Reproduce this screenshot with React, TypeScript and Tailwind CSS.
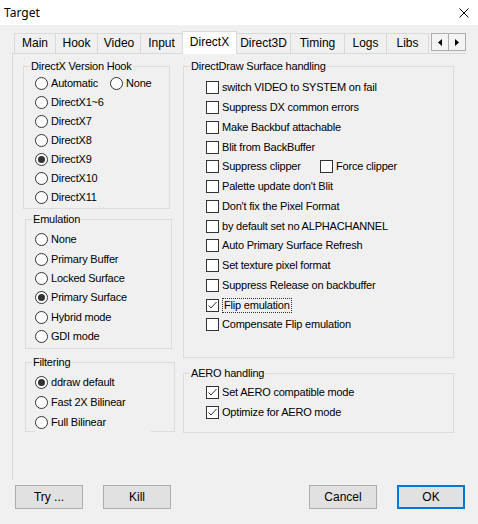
import clsx from "clsx";
import type { ReactNode } from "react";

const tabs = ["Main", "Hook", "Video", "Input", "DirectX", "Direct3D", "Timing", "Logs", "Libs"];
const tabWidths: Record<string, string> = {
  Main: "w-[41px]",
  Hook: "w-[42px]",
  Video: "w-[43px]",
  Input: "w-[42px]",
  DirectX: "w-[55px]",
  Direct3D: "w-[53px]",
  Timing: "w-[54px]",
  Logs: "w-[42px]",
  Libs: "w-[43px]",
};

function Radio({ label, checked }: { label: string; checked?: boolean }) {
  return (
    <span className="flex items-center">
      <span className="flex h-[13px] w-[13px] shrink-0 items-center justify-center rounded-full border border-[#333] bg-white">
        {checked ? <span className="h-[7px] w-[7px] rounded-full bg-[#333]" /> : null}
      </span>
      <span className="ml-[3px] whitespace-nowrap">{label}</span>
    </span>
  );
}

function Check({ label, checked, focused }: { label: string; checked?: boolean; focused?: boolean }) {
  return (
    <span className="flex items-center">
      <span className="flex h-[13px] w-[13px] shrink-0 items-center justify-center border border-[#333] bg-white">
        {checked ? (
          <svg width="11" height="11" viewBox="0 0 11 11" fill="none">
            <path d="M1.5 5.5 L4 8 L9.5 2" stroke="#333" strokeWidth="1" />
          </svg>
        ) : null}
      </span>
      <span
        className={clsx(
          "ml-[3px] whitespace-nowrap",
          focused && "ml-[2px] border border-dotted border-[#333] px-[1px]"
        )}
      >
        {label}
      </span>
    </span>
  );
}

function Group({ title, className, children }: { title: string; className: string; children: ReactNode }) {
  return (
    <fieldset className={clsx("shrink-0 border border-[#dcdcdc]", className)}>
      <legend className="ml-[6px] px-[1px] leading-[13px]">{title}</legend>
      {children}
    </fieldset>
  );
}

const ddrawRows: { label: string; checked?: boolean; focused?: boolean }[] = [
  { label: "switch VIDEO to SYSTEM on fail" },
  { label: "Suppress DX common errors" },
  { label: "Make Backbuf attachable" },
  { label: "Blit from BackBuffer" },
  { label: "CLIPPER" },
  { label: "Palette update don't Blit" },
  { label: "Don't fix the Pixel Format" },
  { label: "by default set no ALPHACHANNEL" },
  { label: "Auto Primary Surface Refresh" },
  { label: "Set texture pixel format" },
  { label: "Suppress Release on backbuffer" },
  { label: "Flip emulation", checked: true, focused: true },
  { label: "Compensate Flip emulation" },
];

export default function App() {
  return (
    <div className="flex h-[524px] w-[478px] flex-col bg-[#f0f0f0] font-['Liberation_Sans',Arial,sans-serif] text-[11px] leading-[13px] tracking-[-0.2px] text-black">
      {/* title bar */}
      <div className="flex h-[25px] items-center justify-between bg-white pl-[4px] pr-[9px]">
        <span className="font-['Segoe_UI','Noto_Sans',sans-serif] text-[12px] tracking-normal">Target</span>
        <svg width="10" height="10" viewBox="0 0 10 10">
          <path d="M0.5 0.5 L9.5 9.5 M9.5 0.5 L0.5 9.5" stroke="#111" strokeWidth="1" />
        </svg>
      </div>

      {/* tabs */}
      <div className="mt-[6px] flex h-[22px] items-end pl-[14px] text-[12px] tracking-normal">
        {tabs.map((t) =>
          t === "DirectX" ? (
            <div
              key={t}
              className={clsx(
                "relative z-10 -mb-px flex h-[23px] items-center justify-center border-x border-t border-[#d9d9d9] bg-white pb-[2px]",
                tabWidths[t]
              )}
            >
              {t}
            </div>
          ) : (
            <div
              key={t}
              className={clsx(
                "flex h-[20px] items-center justify-center border-t border-[#d9d9d9]",
                t !== "Direct3D" && "border-l",
                t === "Libs" && "border-r",
                tabWidths[t]
              )}
            >
              {t}
            </div>
          )
        )}
        <div className="mb-[2px] ml-[2px] flex h-[18px]">
          <div className="flex w-[18px] items-center justify-center border border-[#adadad] bg-[#f4f4f4]">
            <svg width="4" height="7" viewBox="0 0 4 7">
              <path d="M4 0 L0 3.5 L4 7 Z" fill="#000" />
            </svg>
          </div>
          <div className="-ml-px flex w-[18px] items-center justify-center border border-[#adadad] bg-[#f4f4f4]">
            <svg width="4" height="7" viewBox="0 0 4 7">
              <path d="M0 0 L4 3.5 L0 7 Z" fill="#000" />
            </svg>
          </div>
        </div>
      </div>

      {/* tab page */}
      <div className="ml-[12px] flex h-[427px] w-[454px] shrink-0 border-l border-t border-[#d9d9d9]">
        <div className="flex w-[162px] shrink-0 flex-col">
          <Group title="DirectX Version Hook" className="ml-[10px] mt-[6px] h-[149px] w-[147px]">
            <div className="pl-[11px] pt-[1px]">
              <div className="flex h-[19px] items-center">
                <div className="w-[75px]">
                  <Radio label="Automatic" />
                </div>
                <Radio label="None" />
              </div>
              {["DirectX1~6", "DirectX7", "DirectX8", "DirectX9", "DirectX10", "DirectX11"].map((l) => (
                <div key={l} className="flex h-[19px] items-center">
                  <Radio label={l} checked={l === "DirectX9"} />
                </div>
              ))}
            </div>
          </Group>

          <Group title="Emulation" className="ml-[12px] mt-[4px] h-[136px] w-[147px]">
            <div className="pl-[9px] pt-[4px]">
              {["None", "Primary Buffer", "Locked Surface", "Primary Surface", "Hybrid mode", "GDI mode"].map((l) => (
                <div key={l} className="flex h-[19.4px] items-center">
                  <Radio label={l} checked={l === "Primary Surface"} />
                </div>
              ))}
            </div>
          </Group>

          <Group title="Filtering" className="ml-[12px] mt-[7px] h-[76px] w-[150px]">
            <div className="pl-[9px] pt-[4px]">
              <div className="flex h-[19.5px] items-center">
                <Radio label="ddraw default" checked />
              </div>
              <div className="flex h-[19.5px] items-center">
                <Radio label="Fast 2X Bilinear" />
              </div>
              <div className="flex h-[21px] w-[116px] items-center bg-[#f0f0f0]">
                <Radio label="Full Bilinear" />
              </div>
            </div>
          </Group>
        </div>

        <div className="ml-[8px] flex w-[271px] shrink-0 flex-col">
          <Group title="DirectDraw Surface handling" className="mt-[6px] h-[298px] w-[271px]">
            <div className="pl-[22px] pt-[5px]">
              {ddrawRows.map((r) => (
                <div key={r.label} className="flex h-[19.75px] items-center">
                  {r.label === "CLIPPER" ? (
                    <>
                      <div className="w-[114px]">
                        <Check label="Suppress clipper" />
                      </div>
                      <Check label="Force clipper" />
                    </>
                  ) : (
                    <Check label={r.label} checked={r.checked} focused={r.focused} />
                  )}
                </div>
              ))}
            </div>
          </Group>

          <Group title="AERO handling" className="mt-[9px] h-[66px] w-[271px]">
            <div className="pl-[22px] pt-[2px]">
              <div className="flex h-[20px] items-center">
                <Check label="Set AERO compatible mode" checked />
              </div>
              <div className="flex h-[20px] items-center">
                <Check label="Optimize for AERO mode" checked />
              </div>
            </div>
          </Group>
        </div>
      </div>

      {/* buttons */}
      <div className="mt-[5px] flex pl-[15px] pr-[13px] text-[12px] tracking-normal">
        <button className="h-[24px] w-[68px] border border-[#adadad] bg-[#e1e1e1]">Try ...</button>
        <button className="ml-[20px] h-[24px] w-[68px] border border-[#adadad] bg-[#e1e1e1]">Kill</button>
        <div className="flex-1" />
        <button className="h-[24px] w-[68px] border border-[#adadad] bg-[#e1e1e1]">Cancel</button>
        <button className="ml-[20px] h-[24px] w-[68px] border-2 border-[#0078d7] bg-[#e1e1e1]">OK</button>
      </div>
    </div>
  );
}
